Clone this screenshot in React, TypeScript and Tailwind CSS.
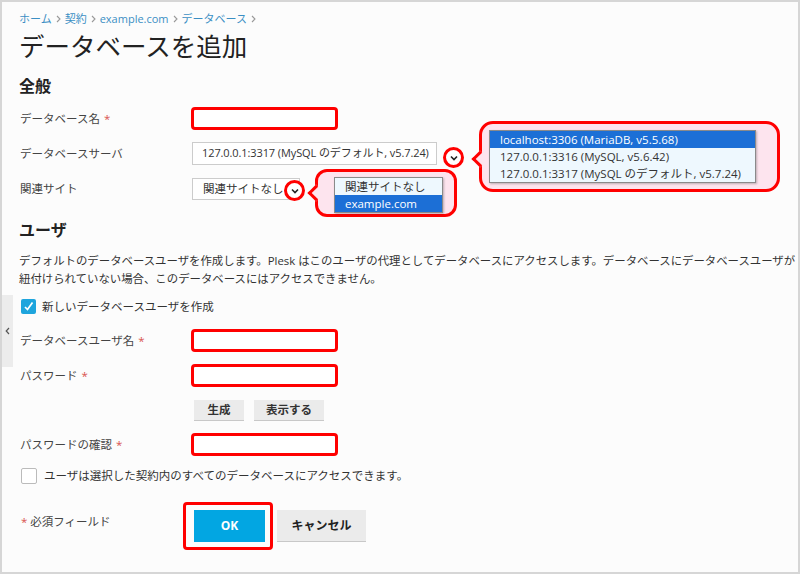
import React from "react";

const font = { fontFamily: '"Open Sans", "Noto Sans CJK JP", sans-serif' };

function Req() {
  return <span className="ml-1 text-[#d9534f]">*</span>;
}

function RedInput() {
  return (
    <div className="h-[23px] w-[147px] rounded-[4px] border-[3px] border-[#ff0000] bg-white" />
  );
}

function Row({ label, children, req }: { label: string; children: React.ReactNode; req?: boolean }) {
  return (
    <div className="flex h-[23px] items-center">
      <div className="w-[172px] pl-px text-[11.5px] text-[#444]">
        {label}
        {req && <Req />}
      </div>
      {children}
    </div>
  );
}

function Chevron({ className }: { className: string }) {
  return (
    <div
      className={`absolute flex h-[21px] w-[21px] items-center justify-center rounded-full border-[3px] border-[#ff0000] bg-white ${className}`}
    >
      <svg width="8" height="6" viewBox="0 0 8 6">
        <path d="M1 1.5 L4 4.5 L7 1.5" fill="none" stroke="#222" strokeWidth="1.6" />
      </svg>
    </div>
  );
}

function Btn({ children, w }: { children: React.ReactNode; w: string }) {
  return (
    <div
      className={`flex h-[21px] ${w} items-center justify-center border-b border-[#c8c8c8] bg-[#ebebeb] text-[11.5px] font-semibold text-[#333]`}
    >
      {children}
    </div>
  );
}

function Sep() {
  return (
    <svg width="5" height="8" viewBox="0 0 5 8">
      <path d="M1 1 L4 4 L1 7" fill="none" stroke="#999" strokeWidth="1.1" />
    </svg>
  );
}

export default function App() {
  return (
    <div
      className="relative h-[574px] w-[800px] overflow-hidden border-2 border-[#d6d6d6] bg-[#fcfcfc]"
      style={font}
    >
      {/* collapse tab */}
      <div className="absolute left-0 top-[293px] flex h-[72px] w-[11px] items-start justify-center bg-[#ececec] pt-[32px]">
        <svg width="5" height="8" viewBox="0 0 5 8">
          <path d="M4 1 L1.2 4 L4 7" fill="none" stroke="#555" strokeWidth="1.2" />
        </svg>
      </div>

      <div className="pl-[17px] pt-[9px]">
        <div className="flex h-[16px] items-center gap-[4px] text-[11px] text-[#3b8fc4]">
          <span>ホーム</span>
          <Sep />
          <span>契約</span>
          <Sep />
          <span>example.com</span>
          <Sep />
          <span>データベース</span>
          <Sep />
        </div>
        <h1 className="mt-[3px] h-[32px] text-[25.5px] leading-[32px] text-[#222]">データベースを追加</h1>

        <h2 className="mt-[13px] h-[22px] text-[16px] font-bold leading-[22px] text-[#222]">全般</h2>

        <div className="mt-[10px] flex flex-col gap-[12px]">
          <Row label="データベース名" req>
            <RedInput />
          </Row>
          <Row label="データベースサーバ">
            <div className="ml-px flex h-[23px] w-[245px] items-center overflow-hidden whitespace-nowrap border border-[#ccc] bg-white pl-[9px] text-[11px] tracking-[-0.1px] text-[#333]">
              127.0.0.1:3317 (MySQL のデフォルト, v5.7.24)
            </div>
          </Row>
          <Row label="関連サイト">
            <div className="ml-px flex h-[22px] w-[108px] items-center overflow-hidden whitespace-nowrap border border-[#ccc] bg-white pl-[10px] text-[11.5px] text-[#333]">
              関連サイトなし
            </div>
          </Row>
        </div>

        <h2 className="mt-[19px] h-[22px] text-[16px] font-bold leading-[22px] text-[#222]">ユーザ</h2>

        <div className="mt-[11px] whitespace-nowrap text-[11.4px] leading-[18px] text-[#333]">
          <div>
            デフォルトのデータベースユーザを作成します。Plesk はこのユーザの代理としてデータベースにアクセスします。データベースにデータベースユーザが
          </div>
          <div>紐付けられていない場合、このデータベースにはアクセスできません。</div>
        </div>

        <div className="mt-[11px] flex h-[15px] items-center">
          <div className="ml-[2px] flex h-[15px] w-[15px] items-center justify-center rounded-[2px] bg-[#1ea5dd]">
            <svg width="11" height="11" viewBox="0 0 11 11">
              <path d="M2 6 L4.5 8.5 L9.5 1.5" fill="none" stroke="#fff" strokeWidth="1.7" />
            </svg>
          </div>
          <span className="ml-[6px] text-[11.5px] text-[#333]">新しいデータベースユーザを作成</span>
        </div>

        <div className="mt-[15px] flex flex-col gap-[12px]">
          <Row label="データベースユーザ名" req>
            <RedInput />
          </Row>
          <Row label="パスワード" req>
            <RedInput />
          </Row>
        </div>

        <div className="ml-[175px] mt-[13px] flex gap-[10px]">
          <Btn w="w-[50px]">生成</Btn>
          <Btn w="w-[70px]">表示する</Btn>
        </div>

        <div className="mt-[12px]">
          <Row label="パスワードの確認" req>
            <RedInput />
          </Row>
        </div>

        <div className="mt-[12px] flex h-[16px] items-center">
          <div className="ml-[2px] h-[16px] w-[16px] rounded-[2px] border border-[#bbb] bg-white" />
          <span className="ml-[7px] text-[11.5px] text-[#333]">
            ユーザは選択した契約内のすべてのデータベースにアクセスできます。
          </span>
        </div>

        <div className="mt-[26px] flex">
          <div className="w-[175px] pl-[2px] pt-[3px] text-[11.5px] text-[#444]">
            <span className="text-[#d9534f]">*</span> 必須フィールド
          </div>
          <div className="-ml-[11px] -mt-[8px] h-[48px] rounded-[4px] border-[3px] border-[#ff0000] p-[5px] pl-[8px]">
            <div className="flex h-[32px] w-[71px] items-center justify-center bg-[#02a6e2] text-[12px] font-bold text-white">
              OK
            </div>
          </div>
          <div className="ml-[4px] flex h-[32px] w-[89px] items-center justify-center border-b border-[#c8c8c8] bg-[#ebebeb] text-[12px] font-bold text-[#222]">
            キャンセル
          </div>
        </div>
      </div>

      {/* annotations */}
      <Chevron className="left-[441px] top-[145px]" />
      <Chevron className="left-[282px] top-[178px]" />

      <div className="absolute left-[477px] top-[119px] h-[71px] w-[301px] rounded-[14px] border-[3px] border-[#ff0000] bg-[#fde4ee]">
        <div className="absolute -left-[8px] top-[29px] h-[12px] w-[12px] rotate-45 border-b-[3px] border-l-[3px] border-[#ff0000] bg-[#fde4ee]" />
        <div className="absolute left-[7px] top-[6px] w-[267px] border border-[#8a8a8a] bg-[#eef8fe] text-[11.5px] leading-[17px] text-[#333] shadow-[1px_1px_2px_rgba(0,0,0,0.25)]">
          <div className="bg-[#1c6fd6] pl-[10px] text-white">localhost:3306 (MariaDB, v5.5.68)</div>
          <div className="pl-[10px]">127.0.0.1:3316 (MySQL, v5.6.42)</div>
          <div className="pl-[10px]">127.0.0.1:3317 (MySQL のデフォルト, v5.7.24)</div>
        </div>
      </div>

      <div className="absolute left-[313px] top-[167px] h-[48px] w-[142px] rounded-[12px] border-[3px] border-[#ff0000] bg-[#fde4ee]">
        <div className="absolute -left-[8px] top-[15px] h-[12px] w-[12px] rotate-45 border-b-[3px] border-l-[3px] border-[#ff0000] bg-[#fde4ee]" />
        <div className="absolute left-[16px] top-[5px] w-[109px] border border-[#8a8a8a] bg-[#eef8fe] text-[11.5px] leading-[17px] text-[#333] shadow-[1px_1px_2px_rgba(0,0,0,0.25)]">
          <div className="pl-[10px]">関連サイトなし</div>
          <div className="bg-[#1c6fd6] pl-[10px] text-white">example.com</div>
        </div>
      </div>
    </div>
  );
}
